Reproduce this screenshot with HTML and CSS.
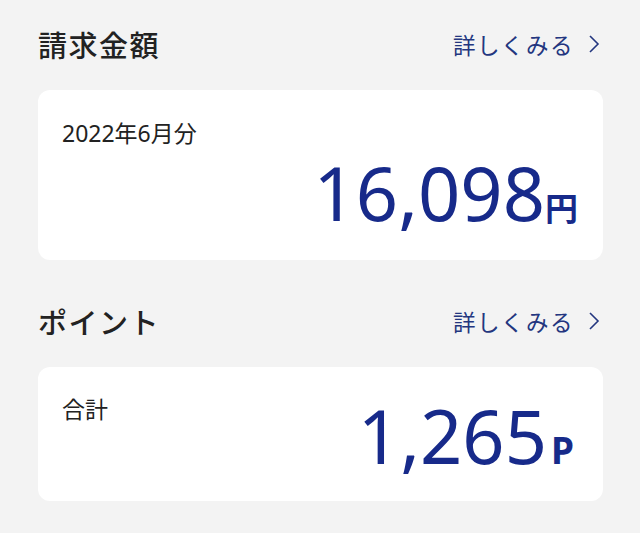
FILE: index.html
```html
<!DOCTYPE html>
<html lang="ja">
<head>
    <meta charset="UTF-8">
    <meta name="viewport" content="width=device-width, initial-scale=1.0">
    <title>請求金額</title>
    <link rel="stylesheet" href="styles.css">
</head>
<body>
    <div class="page">
        <!-- 請求金額 -->
        <section class="block">
            <div class="block-head">
                <h2>請求金額</h2>
                <a class="more" href="#">詳しくみる
                    <svg class="chev" viewBox="0 0 12 20" width="12" height="20"><path d="M2 2 L10 10 L2 18" fill="none" stroke="currentColor" stroke-width="1.6"/></svg>
                </a>
            </div>
            <div class="card card-bill">
                <div class="label">2022年6月分</div>
                <div class="amount"><span class="num">16,098</span><span class="unit">円</span></div>
            </div>
        </section>

        <!-- ポイント -->
        <section class="block">
            <div class="block-head">
                <h2>ポイント</h2>
                <a class="more" href="#">詳しくみる
                    <svg class="chev" viewBox="0 0 12 20" width="12" height="20"><path d="M2 2 L10 10 L2 18" fill="none" stroke="currentColor" stroke-width="1.6"/></svg>
                </a>
            </div>
            <div class="card card-point">
                <div class="label">合計</div>
                <div class="amount"><span class="num">1,265</span><span class="unit unit-p">P</span></div>
            </div>
        </section>
    </div>
</body>
</html>
```

FILE: styles.css
```css
body {
    margin: 0;
    background-color: #f3f3f3;
    font-family: "Noto Sans", "Noto Sans CJK JP", sans-serif;
    color: #222;
}
.page {
    padding: 23px 37px 0 38px;
}
.block {
    margin-bottom: 40px;
}
.block-head {
    display: flex;
    justify-content: space-between;
    align-items: center;
    height: 42px;
    margin-bottom: 25px;
}
h2 {
    margin: 0;
    font-size: 29px;
    font-weight: 500;
    letter-spacing: 1.5px;
}
.more {
    display: flex;
    align-items: center;
    gap: 14px;
    color: #23367f;
    text-decoration: none;
    font-size: 22.5px;
    letter-spacing: 1.5px;
    margin-right: 3px;
}
.chev {
    display: block;
}
.card {
    background-color: #fff;
    border-radius: 12px;
    padding: 0 25px 0 24px;
}
.label {
    font-size: 23px;
    line-height: 30px;
    color: #222;
}
.num {
    font-size: 74px;
    line-height: 1;
    color: #172a8a;
}
.unit {
    font-size: 33px;
    font-weight: 700;
    color: #172a8a;
}
.unit-p {
    margin-left: 4px;
    font-size: 37px;
    font-family: "Noto Sans", sans-serif;
}
/* 請求金額: label above, amount below */
.card-bill {
    height: 170px;
    padding-top: 28px;
    box-sizing: border-box;
}
.card-bill .amount {
    display: flex;
    justify-content: flex-end;
    align-items: baseline;
    margin-top: 8px;
}
/* ポイント: label and amount share the row */
.card-point {
    height: 134px;
    box-sizing: border-box;
    display: flex;
    justify-content: space-between;
    align-items: flex-start;
    padding-top: 27px;
}
.card-point .amount {
    display: flex;
    align-items: baseline;
    align-self: flex-end;
    padding-bottom: 26px;
    margin-right: 4px;
}
```
